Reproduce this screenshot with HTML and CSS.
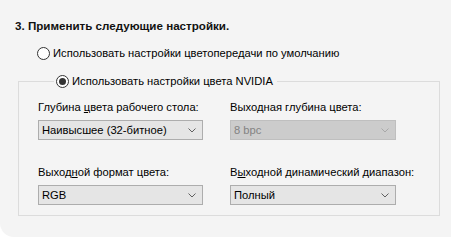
FILE: index.html
```html
<!DOCTYPE html>
<html lang="ru">
<head>
<meta charset="utf-8">
<link rel="stylesheet" href="styles.css">
</head>
<body>
<div class="panel">
  <div class="title">3. Применить следующие настройки.</div>
  <label class="radio-row"><span class="radio"></span>Использовать настройки цветопередачи по умолчанию</label>
  <fieldset class="group">
    <legend class="legend"><span class="radio checked"></span>Использовать настройки цвета NVIDIA</legend>
    <div class="grid">
      <div class="field">
        <div class="label">Глубина <u>ц</u>вета рабочего стола:</div>
        <div class="select"><span>Наивысшее (32-битное)</span><svg class="chev" width="8" height="5" viewBox="0 0 8 5"><path d="M0.5 0.5 L4 4 L7.5 0.5" fill="none" stroke="#606060" stroke-width="1"/></svg></div>
      </div>
      <div class="field">
        <div class="label">Выхо<u>д</u>ная глубина цвета:</div>
        <div class="select disabled"><span>8 bpc</span><svg class="chev" width="8" height="5" viewBox="0 0 8 5"><path d="M0.5 0.5 L4 4 L7.5 0.5" fill="none" stroke="#a8a8a8" stroke-width="1"/></svg></div>
      </div>
      <div class="field">
        <div class="label">Выход<u>н</u>ой формат цвета:</div>
        <div class="select"><span>RGB</span><svg class="chev" width="8" height="5" viewBox="0 0 8 5"><path d="M0.5 0.5 L4 4 L7.5 0.5" fill="none" stroke="#606060" stroke-width="1"/></svg></div>
      </div>
      <div class="field">
        <div class="label">В<u>ы</u>ходной динамический диапазон:</div>
        <div class="select"><span>Полный</span><svg class="chev" width="8" height="5" viewBox="0 0 8 5"><path d="M0.5 0.5 L4 4 L7.5 0.5" fill="none" stroke="#606060" stroke-width="1"/></svg></div>
      </div>
    </div>
  </fieldset>
</div>
</body>
</html>
```
FILE: styles.css
```css
html, body {
  margin: 0;
  padding: 0;
  background: #ffffff;
}
body {
  font-family: "Liberation Sans", Arial, sans-serif;
  font-size: 11.2px;
  line-height: 16px;
  color: #000;
  white-space: nowrap;
}
.panel {
  width: 451px;
  height: 237px;
  box-sizing: border-box;
  background: #f4f4f4;
  border-bottom-left-radius: 14px;
  padding: 18px 0 0 15px;
}
.title {
  font-weight: bold;
  font-size: 11.6px;
  color: #111;
  height: 16px;
}
.radio-row {
  display: flex;
  align-items: center;
  margin: 11px 0 0 22px;
  height: 16px;
}
.radio {
  width: 13px;
  height: 13px;
  box-sizing: border-box;
  border: 1px solid #333;
  border-radius: 50%;
  background: #fff;
  margin-right: 3px;
  flex: none;
  display: flex;
  align-items: center;
  justify-content: center;
}
.radio.checked::after {
  content: "";
  width: 7px;
  height: 7px;
  border-radius: 50%;
  background: #333;
}
.group {
  margin: 12px 0 0 3px;
  width: 422px;
  box-sizing: border-box;
  border: 1px solid #dcdcdc;
  padding: 0 0 10px 19px;
}
.legend {
  display: flex;
  align-items: center;
  margin-left: 16px;
  padding: 0 4px 0 2px;
  height: 16px;
}
.grid {
  padding-top: 10px;
  display: grid;
  grid-template-columns: 165px 166px;
  column-gap: 27px;
  row-gap: 24px;
}
.field {
  display: flex;
  flex-direction: column;
  gap: 5px;
}
.label {
  height: 16px;
}
.select {
  height: 20px;
  box-sizing: border-box;
  border: 1px solid #adadad;
  background: #e5e5e5;
  display: flex;
  align-items: center;
  justify-content: space-between;
  padding: 0 6px 0 3px;
}
.select.disabled {
  background: #cccccc;
  border-color: #bfbfbf;
  color: #838383;
}
.chev {
  display: block;
}
```
